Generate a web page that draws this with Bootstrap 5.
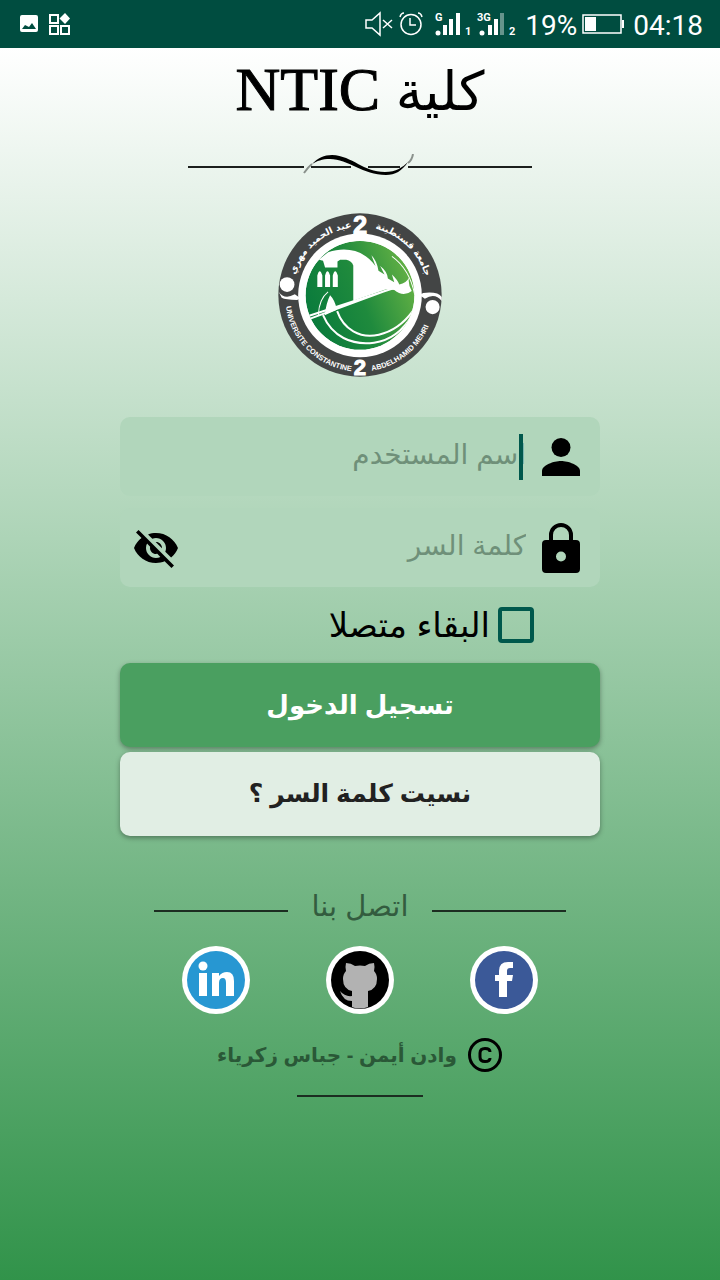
<!DOCTYPE html>
<html lang="ar" dir="rtl">
<head>
<meta charset="utf-8">
<meta name="viewport" content="width=device-width, initial-scale=1">
<title>كلية NTIC</title>
<link href="https://cdn.jsdelivr.net/npm/bootstrap@5.3.0/dist/css/bootstrap.min.css" rel="stylesheet">
<style>
:root{--deep:#004d40;--teal:#00584c}
body{font-family:"Liberation Sans","DejaVu Sans",sans-serif;color:#000;background:#31934a}
.screen{min-height:100vh}
.status{background:var(--deep);height:48px;padding:0 17px 0 16px;font-family:Roboto,sans-serif;color:#fff;font-size:28px}
.status svg,.status span{flex:none}
.page-area{background:linear-gradient(#fff,#31934a);padding:5px 16px 40px}
.title{font-family:"Liberation Serif","DejaVu Sans",serif;font-size:62px;line-height:72px;-webkit-text-stroke:1px #000}
.title bdi{font-size:54px;-webkit-text-stroke:0}
.ornament{width:344px;max-width:100%;height:24px;margin-top:26px}
.crest{width:164px;height:164px;margin-top:35px;overflow:visible}
.login{width:100%;max-width:480px;margin-top:40px}
.field{background:#b1d6bb;border-radius:10px;height:79px;padding:0 20px 0 12px}
.field-gap{margin-bottom:12px}
.field input{background:none!important;border:0;box-shadow:none!important;font-size:28px;line-height:48px;height:60px;padding:0 0 4px;color:#000;min-width:0}
.field input::placeholder{color:#6f9079;opacity:1}
.caret{position:absolute;top:7px;bottom:7px;right:3px;width:4px;background:var(--teal)}
.stay{height:76px;padding-right:66px;font-size:34px}
.stay .form-check-input{width:36px;height:36px;border:4px solid var(--teal);border-radius:4px;background:none;margin:0}
.action{height:84px;border-radius:10px;border:0;font-size:26px;font-weight:700;box-shadow:0 2px 5px rgba(0,0,0,.35)}
.action-main,.action-main:hover{background:#4a9f60;color:#fff}
.action-alt,.action-alt:hover{background:#e1eee4;color:#212121;font-size:25px;margin-top:5px}
.contact{width:412px;max-width:100%;margin-top:49px;font-size:29px;color:#335c3f}
.contact span{padding-bottom:8px}
.contact hr,.bottom-line{height:2px;border:0;background:#1c2d21;opacity:1;margin:0}
.social{width:432px;max-width:100%}
.authors{font-size:20px;font-weight:700;color:#2a5837;gap:10px;padding:22px 0}
.bottom-line{width:126px}
</style>
</head>
<body>
<div class="screen d-flex flex-column">
<header class="status d-flex align-items-center" dir="ltr">
<svg width="20" height="20" viewBox="0 0 20 20" class="ms-1"><path fill="#fff" d="M2 1h14a2 2 0 0 1 2 2v13a2 2 0 0 1-2 2H2a2 2 0 0 1-2-2V3a2 2 0 0 1 2-2zM2 15h14l-4-6-3 4-4-2z"/></svg>
<svg width="22" height="22" viewBox="0 0 22 22" class="ms-2"><g fill="none" stroke="#fff" stroke-width="2"><path d="M2 2h8v8H2zM2 13h8v8H2zM13 13h8v8h-8z"/></g><path fill="#fff" d="M17 0l5 5.500-5 5.500-5.500-5.500z"/></svg>
<div class="ms-auto d-flex align-items-center">
<svg width="158" height="32" viewBox="0 0 158 32"><g fill="none" stroke="#fff" stroke-width="1.500"><path d="M3 12h6l8-7v22l-8-7H3zM20 12l9 8M29 12l-9 8"/><circle cx="48" cy="16.500" r="10"/><path d="M47 10v7h6M37 9q1-4 4-4M55 5q3 0 4 4"/></g><g fill="#fff" font-family="Roboto,sans-serif"><circle cx="75" cy="25" r="2.500"/><path d="M80 17h4v10h-4zM86 11h4v16h-4zM93 5h4v22h-4zM125 17h4v10h-4zM131 11h4v16h-4z"/><circle cx="119" cy="25" r="2.500"/><path opacity=".4" d="M137 5h4v22h-4z"/><text x="72" y="13" font-size="11" font-weight="700">G</text><text x="114" y="13" font-size="11" font-weight="700">3G</text><text x="102" y="27" font-size="11" font-weight="700">1</text><text x="146" y="27" font-size="11" font-weight="700">2</text></g></svg>
<span class="ms-1 mt-1">19%</span>
<svg class="ms-1" width="44" height="24" viewBox="0 0 44 24"><path fill="none" stroke="#fff" stroke-width="1.500" d="M2 3h38v18H2z"/><path fill="#fff" d="M4 5h11v14H4zM41 8h2v8h-2z"/></svg>
<span class="ms-2 mt-1">04:18</span>
</div>
</header>
<main class="page-area flex-grow-1 d-flex flex-column align-items-center">
<h1 class="title m-0 fw-normal"><bdi>كلية</bdi> NTIC</h1>
<svg class="ornament" viewBox="0 0 344 24"><path stroke="#1c1f1d" stroke-width="2" d="M0 13h116M123 13h40M180 13h32M220 13h124"/><path fill="#000" d="M124 10C130 4 136 1 144 1C165 2 175 18 197 18C208 18 215 13 220 8C214 17 207 21 198 21C175 21 160 5 142 5C134 5 129 7 124 10z"/><path fill="none" stroke="#8a918c" stroke-width="2" d="M116 19Q120 13 124 10M220 9Q224 6 225 0"/></svg>
<svg class="crest" viewBox="26 26 488 488" role="img" aria-label="جامعة قسنطينة 2 عبد الحميد مهري">
<defs><linearGradient id="leaf" x1="0" y1=".7" x2="1" y2=".3"><stop offset="0" stop-color="#087a3c"/><stop offset=".5" stop-color="#1f8a3d"/><stop offset="1" stop-color="#67b345"/></linearGradient><clipPath id="disc"><circle cx="270" cy="271" r="162"/></clipPath>
<path id="arcLeft" d="M48 276A222 222 0 0 0 492 276"/><path id="arcTopL" d="M78 207A202 202 0 0 1 252 69"/><path id="arcTopR" d="M290 69A202 202 0 0 1 470 240"/></defs>
<circle cx="270" cy="270" r="243" fill="#434545"/><circle cx="270" cy="271" r="184" fill="#fff"/>
<g clip-path="url(#disc)"><circle cx="270" cy="271" r="162" fill="url(#leaf)"/>
<path fill="#fff" d="M95 205L175 143C232 124 284 139 316 184L304 152Q320 168 325 198L343 209L330 184Q351 200 353 221L372 232L365 209Q382 225 387 239Q408 235 416 218Q412 238 424 258Q399 278 372 255L350 252L250 287V182Q245 168 229 165H211L203 170V188H166L160 168L148 165C134 180 124 194 116 211z"/>
<path fill="none" stroke="#fff" stroke-width="6" d="M112 334L372 249M112 344L352 255M160 330C187 393 245 421 312 412Q382 402 425 331M202 318C221 372 270 401 326 388Q385 375 427 318"/>
<path fill="#fff" d="M143 246v-34q7-26 15 0v34zM166 246v-34q7-26 15 0v34zM189 246v-34q7-26 15 0v34zM165 330Q170 292 181 271Q196 286 201 314z"/>
<path fill="none" stroke="#fff" stroke-width="3" d="M146 330Q148 282 175 261M365 155Q418 193 433 270"/></g>
<g fill="#fff"><circle cx="53" cy="239" r="22"/><path d="M28 260Q45 286 76 268L93 280L83 285Q48 284 37 278z"/><path d="M513 288Q493 262 463 281L447 270L458 264Q502 259 513 276z"/><circle cx="486" cy="306" r="21"/></g>
<g fill="#fff" font-family="Liberation Sans,sans-serif" font-weight="700" text-anchor="middle" stroke="#fff" stroke-width="3"><text x="270" y="90" font-size="76">2</text><text x="270" y="507" font-size="66">2</text></g>
<g fill="#fff" font-family="Liberation Sans Narrow,Liberation Sans,sans-serif" font-weight="700" font-size="22"><text direction="ltr"><textPath href="#arcLeft" startOffset="28">UNIVERSITE CONSTANTINE</textPath></text><text direction="ltr"><textPath href="#arcLeft" startOffset="384">ABDELHAMID MEHRI</textPath></text></g>
<g fill="#fff" font-family="DejaVu Sans,sans-serif" font-weight="700" font-size="28" text-anchor="middle"><text><textPath href="#arcTopL" startOffset="48%">عبد الحميد مهري</textPath></text><text><textPath href="#arcTopR" startOffset="50%">جامعة قسنطينة</textPath></text></g>
</svg>
<form class="login d-flex flex-column" onsubmit="return false">
<div class="field field-gap d-flex align-items-center">
<label for="user"><svg width="38" height="38" viewBox="0 0 38 38"><circle cx="19" cy="9.500" r="9.500"/><path d="M0 38V33C0 27 12 23 19 23S38 27 38 33v5z"/></svg></label>
<div class="position-relative flex-grow-1 me-3"><input id="user" class="form-control" type="text" aria-label="اسم المستخدم" placeholder="اسم المستخدم"><span class="caret"></span></div>
</div>
<div class="field d-flex align-items-center">
<label for="pass"><svg width="38" height="50" viewBox="0 0 38 50"><path fill-rule="evenodd" d="M5 17h2v-5a12 12 0 0 1 24 0v5h3a4 4 0 0 1 4 4v25a4 4 0 0 1-4 4H4a4 4 0 0 1-4-4V21a4 4 0 0 1 4-4zM11 17h16v-5a8 8 0 0 0-16 0zM19 28.500a5 5 0 1 0 0 10a5 5 0 0 0 0-10z"/></svg></label>
<div class="flex-grow-1 me-3"><input id="pass" class="form-control" type="password" aria-label="كلمة السر" placeholder="كلمة السر"></div>
<button type="button" class="btn p-0 border-0" aria-label="إظهار كلمة السر"><svg width="48" height="48" viewBox="0 0 24 24"><path d="M12 7c2.760 0 5 2.240 5 5 0 .65-.13 1.260-.36 1.830l2.920 2.920c1.510-1.260 2.700-2.890 3.430-4.750-1.730-4.390-6-7.500-11-7.500-1.400 0-2.740.25-3.980.7l2.160 2.160C10.740 7.130 11.350 7 12 7zM2 4.270l2.280 2.280.46.46C3.080 8.300 1.780 10.020 1 12c1.730 4.390 6 7.500 11 7.500 1.550 0 3.030-.3 4.380-.84l.42.42L19.730 22 21 20.730 3.270 3 2 4.270zM7.530 9.800l1.550 1.550c-.05.21-.08.43-.08.65 0 1.660 1.340 3 3 3 .22 0 .44-.03.65-.08l1.550 1.550c-.67.33-1.410.53-2.200.53-2.760 0-5-2.240-5-5 0-.79.2-1.530.53-2.200zm4.310-.78l3.150 3.150.02-.16c0-1.660-1.340-3-3-3l-.17.01z"/></svg></button>
</div>
<div class="stay d-flex align-items-center gap-2"><input class="form-check-input" type="checkbox" id="stay"><label for="stay">البقاء متصلا</label></div>
<button type="submit" class="btn action action-main">تسجيل الدخول</button>
<button type="button" class="btn action action-alt">نسيت كلمة السر ؟</button>
</form>
<section class="contact d-flex align-items-center gap-4"><hr class="flex-grow-1"><span>اتصل بنا</span><hr class="flex-grow-1"></section>
<nav class="social row g-0 text-center mt-2" aria-label="اتصل بنا">
<a class="col" href="#" aria-label="Facebook"><svg width="70" height="70" viewBox="0 0 70 70"><circle cx="35" cy="35" r="34" fill="#fff"/><circle cx="35" cy="35" r="29" fill="#3b5998"/><path fill="#fff" d="M30 52V36h-4v-6h4v-4q0-9 9-9h5v6h-3q-3 0-3 3v4h6l-1 6h-5v16z"/></svg></a>
<a class="col" href="#" aria-label="GitHub"><svg width="70" height="70" viewBox="0 0 70 70"><circle cx="35" cy="35" r="34" fill="#fff"/><circle cx="35" cy="35" r="29" fill="#000"/><path fill="#b2b2b2" d="M21 18q5 0 9 3 5-1 10 0 4-3 9-3 1 4 0 8 3 3 3 8 0 10-9 12v16q-9 3-16 0v-6q-9 0-12-10 5 6 12 5v-5q-9-2-9-12 0-5 3-8-1-4 0-8z"/></svg></a>
<a class="col" href="#" aria-label="LinkedIn"><svg width="70" height="70" viewBox="0 0 70 70"><circle cx="35" cy="35" r="34" fill="#fff"/><circle cx="35" cy="35" r="29" fill="#2797d2"/><g fill="#fff"><circle cx="22" cy="21" r="4.500"/><path d="M18 28h8v23h-8zM31 28h7v3q3-4 8-4 7 0 7 9v15h-8V38q0-5-3-5-4 0-4 5v13h-7z"/></g></svg></a>
</nav>
<footer class="authors d-flex align-items-center"><svg width="36" height="36" viewBox="0 0 36 36" fill="none" stroke="#000"><circle cx="18" cy="18" r="15.500" stroke-width="3"/><path stroke-width="3" d="M23 15q0-3.500-5-3.500t-5 4.500v4q0 4.500 5 4.500t5-3.500"/></svg><span>وادن أيمن - جباس زكرياء</span></footer>
<hr class="bottom-line">
</main>
</div>
<script src="https://cdn.jsdelivr.net/npm/bootstrap@5.3.0/dist/js/bootstrap.bundle.min.js"></script>
</body>
</html>
